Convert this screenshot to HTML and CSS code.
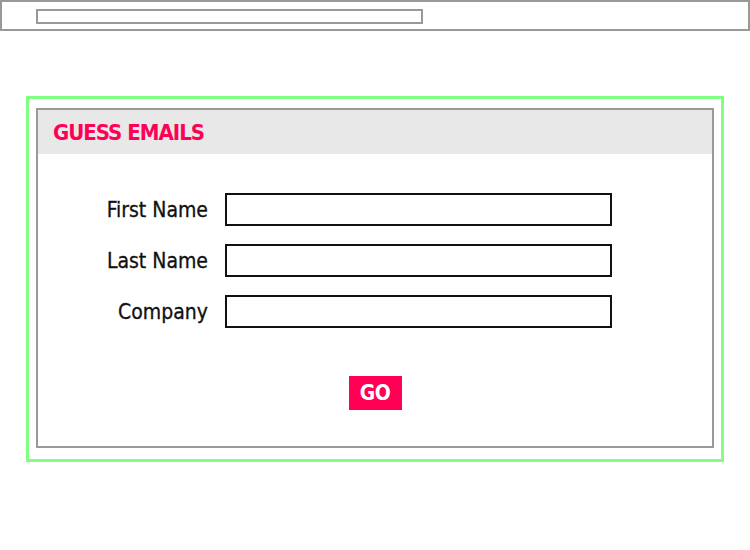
FILE: index.html
```html
<!DOCTYPE html>
<html lang="en">
<head>
  <meta charset="UTF-8">
  <title>Guess Emails</title>
  <link rel="stylesheet" href="styles.css">
</head>
<body>
  <div class="topbar">
    <div class="url-field"></div>
  </div>

  <div class="frame">
    <div class="panel">
      <h1 class="panel-title">GUESS EMAILS</h1>

      <form class="guess-form" onsubmit="return false">
        <div class="fields">
          <label for="firstName">First Name</label>
          <input type="text" id="firstName">

          <label for="lastName">Last Name</label>
          <input type="text" id="lastName">

          <label for="company">Company</label>
          <input type="text" id="company">
        </div>

        <div class="actions">
          <button type="submit" class="go-btn">GO</button>
        </div>
      </form>
    </div>
  </div>
</body>
</html>
```

FILE: styles.css
```css
body {
  margin: 0;
  font-family: "DejaVu Sans Condensed", "Liberation Sans", sans-serif;
  background-color: #fff;
  color: #111;
}
.topbar {
  box-sizing: border-box;
  height: 31px;
  border: 2px solid #999;
  padding: 7px 0 0 34px;
}
.url-field {
  box-sizing: border-box;
  width: 387px;
  height: 15px;
  border: 2px solid #999;
}
.frame {
  box-sizing: border-box;
  width: 698px;
  margin: 65px 0 0 26px;
  border: 3px solid #80ff80;
  padding: 9px 8px 11px 7px;
}
.panel {
  box-sizing: border-box;
  width: 678px;
  border: 2px solid #999;
}
.panel-title {
  margin: 0;
  height: 44px;
  line-height: 45px;
  padding-left: 15px;
  background-color: #e8e8e8;
  color: #ff0055;
  font-size: 22px;
  font-weight: bold;
  letter-spacing: -1px;
}
.guess-form {
  padding: 39px 0 36px 0;
}
.fields {
  display: grid;
  grid-template-columns: 170px 387px;
  column-gap: 17px;
  row-gap: 18px;
  align-items: center;
}
.fields label {
  text-align: right;
  font-size: 21px;
  -webkit-text-stroke: 0.3px #111;
}
.fields input[type="text"] {
  box-sizing: border-box;
  height: 33px;
  margin: 0;
  border: 2px solid #111;
  border-radius: 0;
  font-size: 16px;
}
.actions {
  margin-top: 48px;
  text-align: center;
}
.go-btn {
  width: 53px;
  height: 34px;
  padding: 0;
  border: none;
  background-color: #ff0055;
  color: #fff;
  font-family: inherit;
  font-size: 21px;
  font-weight: bold;
  letter-spacing: -0.5px;
}
```
